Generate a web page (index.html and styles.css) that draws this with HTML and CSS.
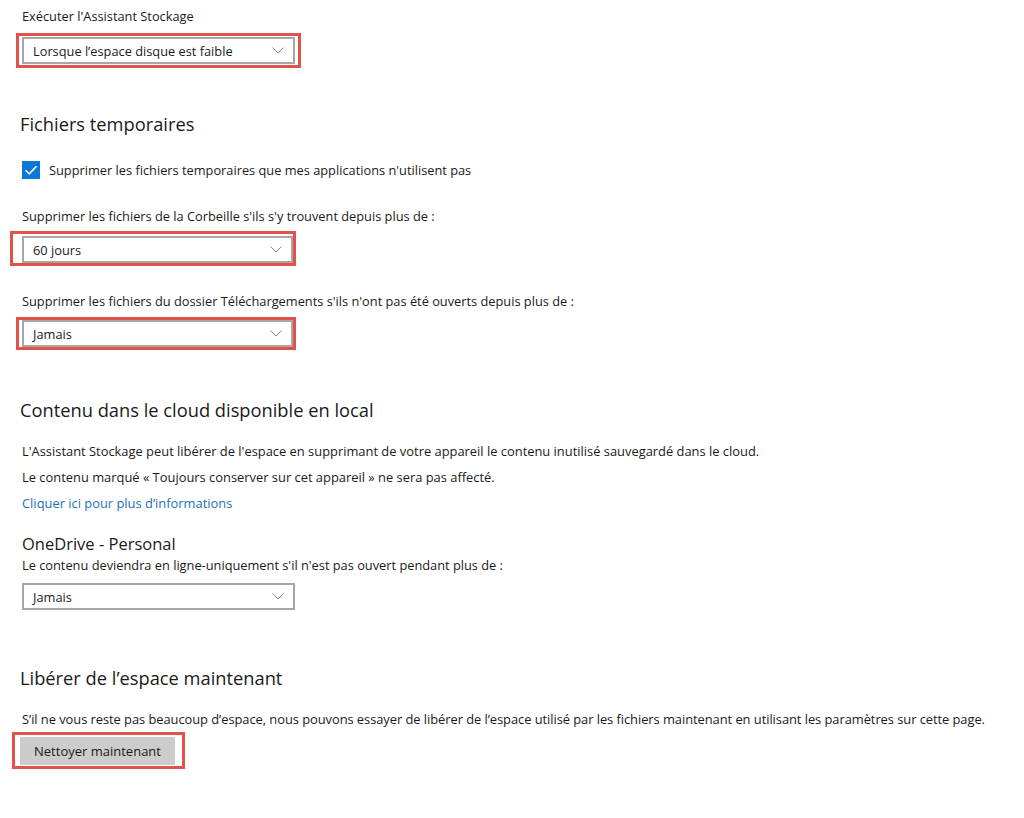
FILE: index.html
```html
<!DOCTYPE html>
<html lang="fr">
<head>
    <meta charset="UTF-8">
    <title>Stockage</title>
    <link rel="stylesheet" href="styles.css">
</head>
<body>
<div class="page">
    <div class="label first">Exécuter l'Assistant Stockage</div>
    <div class="select dd1">
        <span>Lorsque l’espace disque est faible</span>
        <svg class="chevron" viewBox="0 0 12 7"><path d="M0.5 0.5 L6 6 L11.5 0.5"/></svg>
        <div class="mark mark-1"></div>
    </div>

    <h2 class="heading h-temp">Fichiers temporaires</h2>
    <div class="check-row">
        <span class="checkbox">
            <svg viewBox="0 0 18 18"><path d="M3.5 9.2 L7.2 12.8 L14.6 5.2"/></svg>
        </span>
        <span>Supprimer les fichiers temporaires que mes applications n'utilisent pas</span>
    </div>

    <div class="label l-bin">Supprimer les fichiers de la Corbeille s'ils s'y trouvent depuis plus de :</div>
    <div class="select dd2">
        <span>60 jours</span>
        <svg class="chevron" viewBox="0 0 12 7"><path d="M0.5 0.5 L6 6 L11.5 0.5"/></svg>
        <div class="mark mark-2"></div>
    </div>

    <div class="label l-dl">Supprimer les fichiers du dossier Téléchargements s'ils n'ont pas été ouverts depuis plus de :</div>
    <div class="select dd3">
        <span>Jamais</span>
        <svg class="chevron" viewBox="0 0 12 7"><path d="M0.5 0.5 L6 6 L11.5 0.5"/></svg>
        <div class="mark mark-3"></div>
    </div>

    <h2 class="heading h-cloud">Contenu dans le cloud disponible en local</h2>
    <p class="text p-cloud">L'Assistant Stockage peut libérer de l'espace en supprimant de votre appareil le contenu inutilisé sauvegardé dans le cloud.</p>
    <p class="text">Le contenu marqué « Toujours conserver sur cet appareil » ne sera pas affecté.</p>
    <a class="text link" href="#">Cliquer ici pour plus d’informations</a>

    <div class="subheading">OneDrive - Personal</div>
    <div class="label">Le contenu deviendra en ligne-uniquement s'il n'est pas ouvert pendant plus de :</div>
    <div class="select dd4">
        <span>Jamais</span>
        <svg class="chevron" viewBox="0 0 12 7"><path d="M0.5 0.5 L6 6 L11.5 0.5"/></svg>
    </div>

    <h2 class="heading h-free">Libérer de l’espace maintenant</h2>
    <p class="text p-free">S’il ne vous reste pas beaucoup d’espace, nous pouvons essayer de libérer de l’espace utilisé par les fichiers maintenant en utilisant les paramètres sur cette page.</p>
    <div class="button-wrap">
        <button class="button">Nettoyer maintenant</button>
        <div class="mark mark-btn"></div>
    </div>
</div>
</body>
</html>
```

FILE: styles.css
```css
body {
    margin: 0;
    background-color: #fff;
    color: #1a1a1a;
    font-family: "Open Sans", "Noto Sans", sans-serif;
}

.page {
    padding: 6px 0 40px 22px;
}

.label {
    font-size: 12.8px;
    line-height: 20px;
}

.select {
    position: relative;
    box-sizing: border-box;
    width: 273px;
    height: 27px;
    border: 2px solid #a6a6a6;
    display: flex;
    align-items: center;
    padding-left: 9px;
    font-size: 12.8px;
}

.chevron {
    position: absolute;
    right: 9px;
    top: 8px;
    width: 12px;
    height: 7px;
    fill: none;
    stroke: #8a8a8a;
    stroke-width: 1;
}

.dd1 {
    margin-top: 11px;
}

.dd2 {
    margin-top: 10px;
    width: 271px;
}

.dd3 {
    margin-top: 9px;
    width: 271px;
}

.dd4 {
    margin-top: 8px;
}

.mark {
    position: absolute;
    border: 3px solid #e2524a;
    pointer-events: none;
}

.mark-1 {
    left: -8px;
    top: -6px;
    right: -8px;
    bottom: -6px;
}

.mark-2 {
    left: -14px;
    top: -7px;
    right: -5px;
    bottom: -5px;
}

.mark-3 {
    left: -8px;
    top: -5px;
    right: -5px;
    bottom: -5px;
}

.heading {
    margin: 0;
    font-weight: normal;
    font-size: 18.3px;
    line-height: 28px;
    margin-left: -2px;
}

.h-temp {
    margin-top: 46px;
}

.h-cloud {
    margin-top: 49px;
}

.h-free {
    margin-top: 54px;
}

.check-row {
    display: flex;
    align-items: center;
    gap: 9px;
    margin-top: 22px;
    height: 20px;
    font-size: 12.8px;
}

.checkbox {
    width: 18px;
    height: 18px;
    background-color: #0a78d4;
}

.checkbox svg {
    display: block;
    width: 18px;
    height: 18px;
    fill: none;
    stroke: #fff;
    stroke-width: 1.6;
}

.l-bin {
    margin-top: 26px;
}

.l-dl {
    margin-top: 28px;
}

.text {
    display: block;
    margin: 0;
    font-size: 12.9px;
    line-height: 26px;
}

.p-cloud {
    margin-top: 14px;
}

.link {
    color: #1b73b8;
    text-decoration: none;
}

.subheading {
    margin-top: 17px;
    font-size: 16.5px;
    line-height: 22px;
}

.p-free {
    margin-top: 14px;
    letter-spacing: -0.05px;
}

.button-wrap {
    position: relative;
    width: 155px;
    height: 28px;
    margin-top: 5px;
    margin-left: -2px;
}

.button {
    display: block;
    width: 155px;
    height: 28px;
    border: none;
    background-color: #cccccc;
    color: #1a1a1a;
    font-family: "Open Sans", "Noto Sans", sans-serif;
    font-size: 13px;
}

.mark-btn {
    left: -8px;
    top: -5px;
    right: -10px;
    bottom: -4px;
}
```
